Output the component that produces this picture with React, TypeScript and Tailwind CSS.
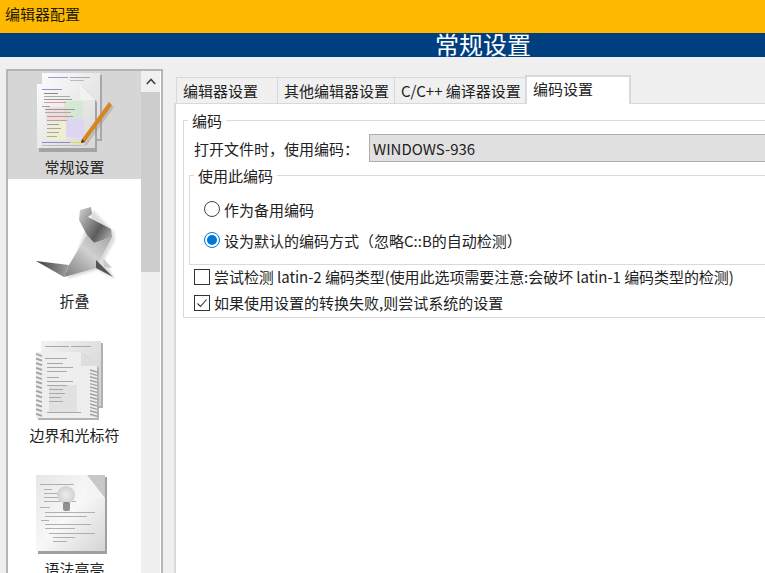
const cjk = "font-['Noto_Sans_CJK_SC','Noto_Sans',sans-serif]";

const tabs = ["编辑器设置", "其他编辑器设置", "C/C++ 编译器设置"];

// faint code lines on the page icons: [x, y, width, colour]
const codeLines: [number, number, number, string][] = [
  [41, 89, 20, "#8f8fd8"], [43, 93, 14, "#888"], [43, 96, 26, "#aaa"], [43, 99, 28, "#999"], [43, 102, 22, "#d99"],
  [41, 106, 8, "#99c"], [44, 109, 30, "#999"], [44, 112, 26, "#aaa"], [46, 116, 26, "#b99"], [46, 120, 20, "#aaa"],
  [46, 124, 12, "#99c"], [46, 128, 14, "#aaa"], [46, 132, 12, "#aaa"], [46, 136, 10, "#aaa"], [41, 142, 28, "#88c"], [69, 142, 11, "#dd4"], [41, 145, 40, "#bbb"],
];

const greyLines: [number, number, number][] = [
  [44, 346, 24], [70, 346, 20], [44, 358, 22], [46, 363, 16], [46, 367, 26], [46, 371, 20], [46, 377, 12], [46, 381, 26], [46, 385, 20],
  [48, 389, 14], [48, 393, 16], [48, 397, 12], [48, 401, 14], [46, 412, 34],
];

const bulbLines: [number, number, number][] = [
  [39, 484, 34], [43, 489, 8], [43, 493, 14], [43, 497, 14], [43, 501, 32], [39, 507, 10], [44, 512, 50],
  [44, 516, 42], [40, 520, 8], [44, 524, 46], [44, 528, 30], [48, 533, 46], [52, 537, 22], [52, 541, 14],
];

const GeneralIcon = () => (
  <svg width="88" height="84" viewBox="30 72 88 84">
    <defs>
      <linearGradient id="pg" x1="0" y1="0" x2="1" y2="1">
        <stop offset="0" stopColor="#fbfbfb" />
        <stop offset="1" stopColor="#d8d8d8" />
      </linearGradient>
      <linearGradient id="pen" x1="0" y1="0" x2="1" y2="1">
        <stop offset="0" stopColor="#f0a030" />
        <stop offset="1" stopColor="#c06a10" />
      </linearGradient>
      <filter id="gsoft"><feGaussianBlur stdDeviation="0.35" /></filter>
    </defs>
    <g filter="url(#gsoft)">
      <polygon points="43,75 101,75 101,141 43,141" fill="#a8a8a8" />
      <polygon points="41,73 99,73 99,139 41,139" fill="url(#pg)" />
      <rect x="47" y="77" width="20" height="1" fill="#9a9ad8" />
      <rect x="69" y="77" width="20" height="1" fill="#aaa" />
      <rect x="69" y="80" width="14" height="1" fill="#bbb" />
      <polygon points="38,86 81,86 96,102 96,152 38,152" fill="#a4a4a4" />
      <polygon points="36,84 79,84 94,100 94,148 36,148" fill="url(#pg)" />
      <polygon points="79,84 94,100 79,100" fill="#f2f2f2" />
      <rect x="63" y="101" width="19" height="18" fill="#cfe6cf" opacity="0.8" />
      <rect x="45" y="107" width="22" height="16" fill="#f0d0d0" opacity="0.6" />
      <rect x="46" y="121" width="19" height="19" fill="#f0f0cc" opacity="0.85" />
      <rect x="65" y="119" width="18" height="18" fill="#dcd6f0" />
      {codeLines.map(([x, y, w, c], i) => (
        <rect key={i} x={x} y={y} width={w} height="1" fill={c} />
      ))}
      <polygon points="110,105 113,107 86,145 82,146" fill="#8f8f8f" opacity="0.4" />
    </g>
    <polygon points="108,102 111,105 84,142 80,143 81,139" fill="url(#pen)" />
    <polygon points="81,139 84,142 80,143" fill="#5a3a10" />
  </svg>
);

const FoldIcon = () => (
  <svg width="88" height="84" viewBox="30 206 88 84">
    <defs>
      <linearGradient id="neck" x1="0" y1="0" x2="1" y2="0.7">
        <stop offset="0" stopColor="#d4d4d4" />
        <stop offset="0.7" stopColor="#5c5c5c" />
        <stop offset="1" stopColor="#a0a0a0" />
      </linearGradient>
      <linearGradient id="body" x1="0" y1="1" x2="1" y2="0">
        <stop offset="0" stopColor="#7c7c7c" />
        <stop offset="0.55" stopColor="#d0d0d0" />
        <stop offset="1" stopColor="#a4a4a4" />
      </linearGradient>
      <linearGradient id="tail" x1="0" y1="0" x2="1" y2="0">
        <stop offset="0" stopColor="#3c3c3c" />
        <stop offset="1" stopColor="#a0a0a0" />
      </linearGradient>
      <filter id="soft"><feGaussianBlur stdDeviation="1.2" /></filter>
    </defs>
    <polygon points="92,210 113,232 114,240 103,260 114,279 96,270 66,279" fill="#bbb" opacity="0.5" filter="url(#soft)" />
    <polygon points="79,210 90,207 91,214 87,217 110,229 111,237 93,243 86,235 78,220" fill="url(#neck)" />
    <polygon points="86,235 93,243 111,237 100,258 95,268 63,277 68,265" fill="url(#body)" />
    <polygon points="35,261 68,265 63,277" fill="url(#tail)" />
    <polygon points="95,260 112,277 95,268" fill="#555" />
    <polygon points="102,258 111,268 103,267" fill="#cacaca" />
  </svg>
);

const MarginIcon = () => (
  <svg width="88" height="84" viewBox="30 340 88 84">
    <defs>
      <linearGradient id="mg" x1="0" y1="0" x2="1" y2="1">
        <stop offset="0" stopColor="#f2f2f2" />
        <stop offset="1" stopColor="#cfcfcf" />
      </linearGradient>
      <filter id="msoft"><feGaussianBlur stdDeviation="0.4" /></filter>
    </defs>
    <g filter="url(#msoft)">
      <polygon points="42,343 102,343 102,408 42,408" fill="#b0b0b0" />
      <polygon points="40,341 100,341 100,406 40,406" fill="url(#mg)" />
      <polygon points="37,354 83,354 98,368 98,420 37,420" fill="#b4b4b4" />
      <polygon points="35,352 80,352 96,366 96,418 35,418" fill="#eeeeee" />
      <polygon points="80,352 96,366 80,366" fill="#dedede" />
      {Array.from({ length: 14 }, (_, i) => (
        <g key={i}>
          <line x1="35" y1={354 + i * 4.6} x2="41" y2={356 + i * 4.6} stroke="#a2a2a2" strokeWidth="1.8" />
          <line x1="89" y1={370 + i * 3.4} x2="96" y2={372 + i * 3.4} stroke="#a2a2a2" strokeWidth="1.5" />
        </g>
      ))}
      <rect x="48" y="385" width="28" height="28" fill="#dcdcdc" opacity="0.7" />
      {greyLines.map(([x, y, w], i) => (
        <rect key={i} x={x} y={y} width={w} height="1" fill="#a8a8a8" />
      ))}
    </g>
  </svg>
);

const SyntaxIcon = () => (
  <svg width="88" height="84" viewBox="30 474 88 84">
    <defs>
      <linearGradient id="sx" x1="0" y1="0" x2="1" y2="1">
        <stop offset="0" stopColor="#e6e6e6" />
        <stop offset="0.5" stopColor="#f8f8f8" />
        <stop offset="1" stopColor="#d4d4d4" />
      </linearGradient>
      <radialGradient id="bulb">
        <stop offset="0" stopColor="#eeeeee" />
        <stop offset="1" stopColor="#d0d0d0" />
      </radialGradient>
      <filter id="ssoft"><feGaussianBlur stdDeviation="0.45" /></filter>
    </defs>
    <g filter="url(#ssoft)">
      <polygon points="37,477 106,477 106,554 37,554" fill="#a0a0a0" />
      <polygon points="35,475 104,475 104,551 35,551" fill="url(#sx)" />
      <polygon points="86,478 104,498 86,498" fill="#f4f4f4" />
      <polygon points="86,475 104,475 104,498" fill="#c8c8c8" />
      {bulbLines.map(([x, y, w], i) => (
        <rect key={i} x={x} y={y} width={w} height="1" fill="#b0b0b0" />
      ))}
      <circle cx="65" cy="495" r="9" fill="url(#bulb)" />
      <rect x="62" y="502" width="7" height="9" rx="2" fill="#666" opacity="0.7" />
    </g>
  </svg>
);

const navItems = [
  { label: "常规设置", Icon: GeneralIcon, active: true },
  { label: "折叠", Icon: FoldIcon, active: false },
  { label: "边界和光标符", Icon: MarginIcon, active: false },
  { label: "语法高亮", Icon: SyntaxIcon, active: false },
];

const Radio = ({ checked }: { checked?: boolean }) => (
  <span className={`flex h-4 w-4 shrink-0 items-center justify-center rounded-full border bg-white ${checked ? "border-[#0078d7]" : "border-[#444]"}`}>
    {checked && <span className="h-[10px] w-[10px] rounded-full bg-[#0078d7]" />}
  </span>
);

const Checkbox = ({ checked }: { checked?: boolean }) => (
  <span className="flex h-4 w-4 shrink-0 items-center justify-center border border-[#333] bg-white">
    {checked && (
      <svg width="12" height="12" viewBox="0 0 12 12" fill="none">
        <path d="M1.5 6.5 L4.5 9.5 L10.5 2.5" stroke="#333" strokeWidth="1.1" />
      </svg>
    )}
  </span>
);

export default function App() {
  return (
    <div className={`flex h-[573px] w-[765px] flex-col overflow-hidden bg-[#efefef] text-[15px] leading-5 text-[#222] ${cjk}`}>
      <div className="flex h-[33px] shrink-0 items-center bg-[#ffb900] pb-[6px] pl-[5px] text-[#1c1c00]">编辑器配置</div>
      <div className="flex h-6 shrink-0 items-center bg-[#003f7f] pb-[2px] pl-[435px] text-[24px] text-white">常规设置</div>

      <div className="flex min-h-0 flex-1">
        {/* left list */}
        <div className="ml-[6px] mt-3 flex w-[157px] shrink-0 border-x-2 border-t-2 border-[#b4b4bc] bg-white">
          <div className="w-[133px] shrink-0">
            {navItems.map(({ label, Icon, active }) => (
              <div key={label} className={`mb-[26px] flex h-[108px] flex-col items-center pt-[1px] ${active ? "bg-[#d6d6d6]" : ""}`}>
                <Icon />
                <span className="mt-[1px]">{label}</span>
              </div>
            ))}
          </div>
          <div className="flex w-[19px] shrink-0 flex-col bg-[#f0f0f0]">
            <div className="flex h-[21px] items-center justify-center">
              <svg width="10" height="7" viewBox="0 0 10 7" fill="none">
                <path d="M0.8 6 L5 1.5 L9.2 6" stroke="#404040" strokeWidth="1.6" />
              </svg>
            </div>
            <div className="h-[180px] bg-[#cdcdcd]" />
          </div>
        </div>

        {/* settings pane */}
        <div className="ml-[11px] flex min-w-0 flex-1 flex-col pt-[18px]">
          <div className="relative z-10 -mb-px flex h-[29px] items-end pl-[2px]">
            {tabs.map((tab, i) => (
              <div
                key={tab}
                className={`flex h-[27px] items-center border-y border-l border-[#d9d9d9] bg-[#f0f0f0] pl-[6px] ${
                  i === 0 ? "w-[101px] pl-[5px]" : i === 1 ? "w-[117px]" : "w-[131px]"
                }`}
              >
                {tab}
              </div>
            ))}
            <div className="flex h-[29px] w-[106px] items-start border-x-2 border-t-2 border-[#d9d9d9] bg-white pl-[6px] pt-[2px]">编码设置</div>
          </div>

          <div className="flex-1 border-l-2 border-t border-[#d9d9d9] bg-white pl-[7px] pt-4">
            <div className="relative w-[640px] border border-[#d9d9d9] pb-1 pl-[5px] pt-[13px]">
              <span className="absolute -top-[10px] left-[4px] bg-white px-[4px]">编码</span>
              <div className="flex h-7 items-center pl-[5px]">
                <span className="w-[175px] shrink-0 pt-[2px]">打开文件时，使用编码：</span>
                <div className="flex h-7 flex-1 items-center border border-[#adadad] bg-[#e1e1e1] pl-[3px] pt-[2px]">WINDOWS-936</div>
              </div>

              <div className="relative mt-[13px] h-[90px] border border-[#d9d9d9] pl-[14px] pt-[23px]">
                <span className="absolute -top-[10px] left-[4px] bg-white px-[4px]">使用此编码</span>
                <label className="flex h-5 items-center gap-1">
                  <Radio />
                  <span className="pt-[2px]">作为备用编码</span>
                </label>
                <label className="mt-[11px] flex h-5 items-center gap-1">
                  <Radio checked />
                  <span className="pt-[2px]">设为默认的编码方式（忽略C::B的自动检测）</span>
                </label>
              </div>

              <label className="mt-[2px] flex h-5 items-center gap-1 pl-[5px]">
                <Checkbox />
                <span className="whitespace-nowrap tracking-[-0.06px]">尝试检测 latin-2 编码类型(使用此选项需要注意:会破坏 latin-1 编码类型的检测)</span>
              </label>
              <label className="mt-[6px] flex h-5 items-center gap-1 pl-[5px]">
                <Checkbox checked />
                <span className="whitespace-nowrap">如果使用设置的转换失败,则尝试系统的设置</span>
              </label>
            </div>
          </div>
        </div>
      </div>
    </div>
  );
}
